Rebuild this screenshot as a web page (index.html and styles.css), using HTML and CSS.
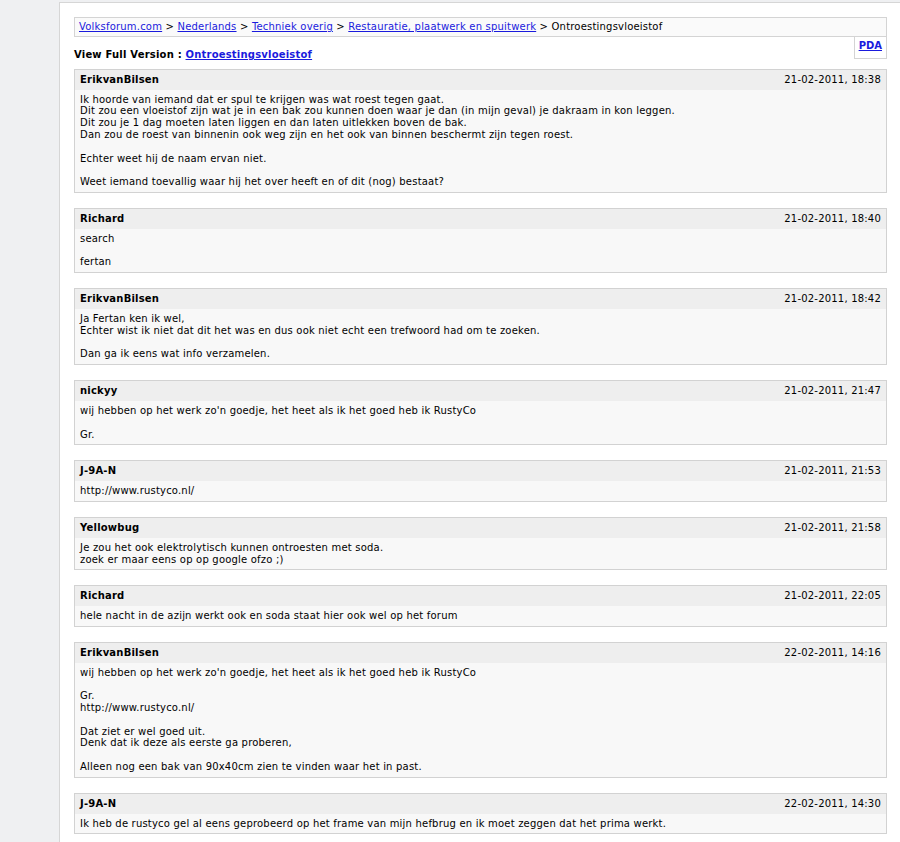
FILE: index.html
```html
<!DOCTYPE html>
<html lang="nl">
<head>
    <meta charset="UTF-8">
    <title>Ontroestingsvloeistof [Archive] - Volksforum.com</title>
    <link rel="stylesheet" href="styles.css">
</head>
<body>
    <div class="pagebody">
        <!-- breadcrumb -->
        <div class="navbar">
            <a href="#">Volksforum.com</a> &gt; <a href="#">Nederlands</a> &gt; <a href="#">Techniek overig</a> &gt; <a href="#">Restauratie, plaatwerk en spuitwerk</a> &gt; Ontroestingsvloeistof
        </div>
        <div class="pda"><a href="#">PDA</a></div>
        <div class="fullversion">View Full Version : <a href="#">Ontroestingsvloeistof</a></div>

        <!-- posts -->
        <div class="post">
            <div class="posttop"><span class="username">ErikvanBilsen</span><span class="date">21-02-2011, 18:38</span></div>
            <div class="posttext">Ik hoorde van iemand dat er spul te krijgen was wat roest tegen gaat.<br>
Dit zou een vloeistof zijn wat je in een bak zou kunnen doen waar je dan (in mijn geval) je dakraam in kon leggen.<br>
Dit zou je 1 dag moeten laten liggen en dan laten uitlekken boven de bak.<br>
Dan zou de roest van binnenin ook weg zijn en het ook van binnen beschermt zijn tegen roest.<br>
<br>
Echter weet hij de naam ervan niet.<br>
<br>
Weet iemand toevallig waar hij het over heeft en of dit (nog) bestaat?</div>
        </div>

        <div class="post">
            <div class="posttop"><span class="username">Richard</span><span class="date">21-02-2011, 18:40</span></div>
            <div class="posttext">search<br>
<br>
fertan</div>
        </div>

        <div class="post">
            <div class="posttop"><span class="username">ErikvanBilsen</span><span class="date">21-02-2011, 18:42</span></div>
            <div class="posttext">Ja Fertan ken ik wel,<br>
Echter wist ik niet dat dit het was en dus ook niet echt een trefwoord had om te zoeken.<br>
<br>
Dan ga ik eens wat info verzamelen.</div>
        </div>

        <div class="post">
            <div class="posttop"><span class="username">nickyy</span><span class="date">21-02-2011, 21:47</span></div>
            <div class="posttext">wij hebben op het werk zo'n goedje, het heet als ik het goed heb ik RustyCo<br>
<br>
Gr.</div>
        </div>

        <div class="post">
            <div class="posttop"><span class="username">J-9A-N</span><span class="date">21-02-2011, 21:53</span></div>
            <div class="posttext">http://www.rustyco.nl/</div>
        </div>

        <div class="post">
            <div class="posttop"><span class="username">Yellowbug</span><span class="date">21-02-2011, 21:58</span></div>
            <div class="posttext">Je zou het ook elektrolytisch kunnen ontroesten met soda.<br>
zoek er maar eens op op google ofzo ;)</div>
        </div>

        <div class="post">
            <div class="posttop"><span class="username">Richard</span><span class="date">21-02-2011, 22:05</span></div>
            <div class="posttext">hele nacht in de azijn werkt ook en soda staat hier ook wel op het forum</div>
        </div>

        <div class="post">
            <div class="posttop"><span class="username">ErikvanBilsen</span><span class="date">22-02-2011, 14:16</span></div>
            <div class="posttext">wij hebben op het werk zo'n goedje, het heet als ik het goed heb ik RustyCo<br>
<br>
Gr.<br>
http://www.rustyco.nl/<br>
<br>
Dat ziet er wel goed uit.<br>
Denk dat ik deze als eerste ga proberen,<br>
<br>
Alleen nog een bak van 90x40cm zien te vinden waar het in past.</div>
        </div>

        <div class="post">
            <div class="posttop"><span class="username">J-9A-N</span><span class="date">22-02-2011, 14:30</span></div>
            <div class="posttext">Ik heb de rustyco gel al eens geprobeerd op het frame van mijn hefbrug en ik moet zeggen dat het prima werkt.</div>
        </div>
    </div>
</body>
</html>
```

FILE: styles.css
```css
html, body {
    overflow-x: hidden;
}
body {
    margin: 0;
    padding: 2px 0 0 0;
    font-family: "DejaVu Sans", Verdana, sans-serif;
    font-size: 10px;
    line-height: 11.8px;
    letter-spacing: 0.2px;
    color: #000;
    background-color: #eff0f2;
}
a {
    color: #1a1add;
}

/* Page */
.pagebody {
    margin-left: 59px;
    width: 813px;
    padding: 14px 14px 20px 14px;
    background-color: #fff;
    border: 1px solid #d6d6d6;
}
.navbar {
    padding: 3px 4px;
    line-height: 12px;
    background-color: #fafafa;
    border: 1px solid #d4d4d4;
}
.pda {
    float: right;
    padding: 3px 4px 6px 4px;
    font-weight: bold;
    letter-spacing: 0;
    background-color: #fff;
    border: 1px solid #d4d4d4;
    border-top: 0;
}
.fullversion {
    margin-top: 12px;
    font-weight: bold;
}

/* Posts */
.post {
    margin-top: 8px;
    background-color: #f8f8f8;
    border: 1px solid #d2d2d2;
}
.post + .post {
    margin-top: 15px;
}
.posttop {
    display: flex;
    justify-content: space-between;
    padding: 4px 5px;
    background-color: #eee;
}
.username {
    font-weight: bold;
}
.posttext {
    padding: 4px 5px;
}
```
